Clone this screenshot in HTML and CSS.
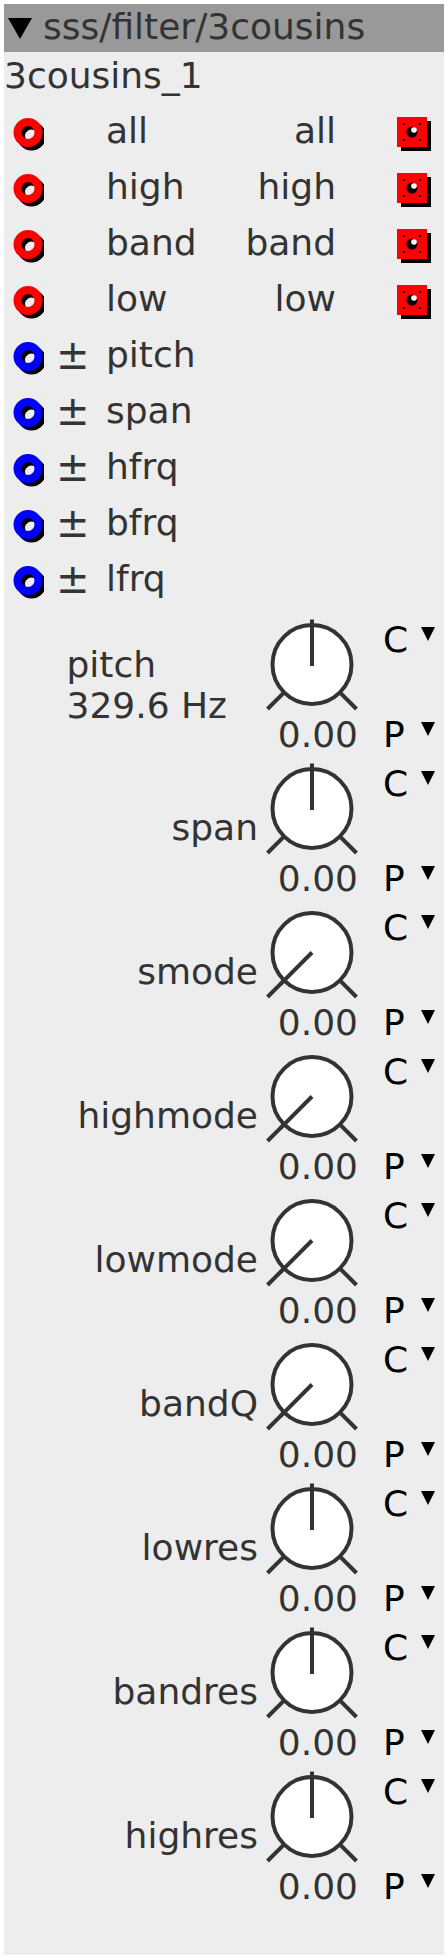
FILE: index.html
```html
<!DOCTYPE html>
<html>
<head>
<meta charset="utf-8">
<link rel="stylesheet" href="styles.css">
</head>
<body>
<div class="panel">
  <div class="header">
    <svg class="htri" width="24" height="21" viewBox="0 0 24 21"><polygon points="0,0 24,0 12,21" fill="#000"/></svg>
    <span class="title">sss/filter/3cousins</span>
  </div>
  <div class="name">3cousins_1</div>

  <div class="row">
    <svg class="inport" width="40" height="56" viewBox="0 0 40 56"><circle cx="27.5" cy="33" r="10.5" fill="none" stroke="#000" stroke-width="8"/><circle cx="24" cy="29.5" r="10.5" fill="none" stroke="#f00" stroke-width="8"/></svg>
    <span class="sign"></span>
    <span class="lab">all</span>
    <span class="rlab">all</span>
    <svg class="outport" width="48" height="56" viewBox="0 0 48 56"><rect x="5" y="18" width="30" height="30" fill="#000"/><rect x="1" y="14" width="30" height="30" fill="#f00"/><rect x="7" y="20" width="2" height="2" fill="#000"/><rect x="23" y="20" width="2" height="2" fill="#000"/><rect x="7" y="36" width="2" height="2" fill="#000"/><rect x="23" y="36" width="2" height="2" fill="#000"/><circle cx="16" cy="29" r="5.5" fill="#000"/><circle cx="18" cy="27" r="2.8" fill="#fff"/></svg>
  </div>
  <div class="row">
    <svg class="inport" width="40" height="56" viewBox="0 0 40 56"><circle cx="27.5" cy="33" r="10.5" fill="none" stroke="#000" stroke-width="8"/><circle cx="24" cy="29.5" r="10.5" fill="none" stroke="#f00" stroke-width="8"/></svg>
    <span class="sign"></span>
    <span class="lab">high</span>
    <span class="rlab">high</span>
    <svg class="outport" width="48" height="56" viewBox="0 0 48 56"><rect x="5" y="18" width="30" height="30" fill="#000"/><rect x="1" y="14" width="30" height="30" fill="#f00"/><rect x="7" y="20" width="2" height="2" fill="#000"/><rect x="23" y="20" width="2" height="2" fill="#000"/><rect x="7" y="36" width="2" height="2" fill="#000"/><rect x="23" y="36" width="2" height="2" fill="#000"/><circle cx="16" cy="29" r="5.5" fill="#000"/><circle cx="18" cy="27" r="2.8" fill="#fff"/></svg>
  </div>
  <div class="row">
    <svg class="inport" width="40" height="56" viewBox="0 0 40 56"><circle cx="27.5" cy="33" r="10.5" fill="none" stroke="#000" stroke-width="8"/><circle cx="24" cy="29.5" r="10.5" fill="none" stroke="#f00" stroke-width="8"/></svg>
    <span class="sign"></span>
    <span class="lab">band</span>
    <span class="rlab">band</span>
    <svg class="outport" width="48" height="56" viewBox="0 0 48 56"><rect x="5" y="18" width="30" height="30" fill="#000"/><rect x="1" y="14" width="30" height="30" fill="#f00"/><rect x="7" y="20" width="2" height="2" fill="#000"/><rect x="23" y="20" width="2" height="2" fill="#000"/><rect x="7" y="36" width="2" height="2" fill="#000"/><rect x="23" y="36" width="2" height="2" fill="#000"/><circle cx="16" cy="29" r="5.5" fill="#000"/><circle cx="18" cy="27" r="2.8" fill="#fff"/></svg>
  </div>
  <div class="row">
    <svg class="inport" width="40" height="56" viewBox="0 0 40 56"><circle cx="27.5" cy="33" r="10.5" fill="none" stroke="#000" stroke-width="8"/><circle cx="24" cy="29.5" r="10.5" fill="none" stroke="#f00" stroke-width="8"/></svg>
    <span class="sign"></span>
    <span class="lab">low</span>
    <span class="rlab">low</span>
    <svg class="outport" width="48" height="56" viewBox="0 0 48 56"><rect x="5" y="18" width="30" height="30" fill="#000"/><rect x="1" y="14" width="30" height="30" fill="#f00"/><rect x="7" y="20" width="2" height="2" fill="#000"/><rect x="23" y="20" width="2" height="2" fill="#000"/><rect x="7" y="36" width="2" height="2" fill="#000"/><rect x="23" y="36" width="2" height="2" fill="#000"/><circle cx="16" cy="29" r="5.5" fill="#000"/><circle cx="18" cy="27" r="2.8" fill="#fff"/></svg>
  </div>

  <div class="row">
    <svg class="inport" width="40" height="56" viewBox="0 0 40 56"><circle cx="27.5" cy="33" r="10.5" fill="none" stroke="#000" stroke-width="8"/><circle cx="24" cy="29.5" r="10.5" fill="none" stroke="#00f" stroke-width="8"/></svg>
    <span class="sign">±</span>
    <span class="lab">pitch</span>
  </div>
  <div class="row">
    <svg class="inport" width="40" height="56" viewBox="0 0 40 56"><circle cx="27.5" cy="33" r="10.5" fill="none" stroke="#000" stroke-width="8"/><circle cx="24" cy="29.5" r="10.5" fill="none" stroke="#00f" stroke-width="8"/></svg>
    <span class="sign">±</span>
    <span class="lab">span</span>
  </div>
  <div class="row">
    <svg class="inport" width="40" height="56" viewBox="0 0 40 56"><circle cx="27.5" cy="33" r="10.5" fill="none" stroke="#000" stroke-width="8"/><circle cx="24" cy="29.5" r="10.5" fill="none" stroke="#00f" stroke-width="8"/></svg>
    <span class="sign">±</span>
    <span class="lab">hfrq</span>
  </div>
  <div class="row">
    <svg class="inport" width="40" height="56" viewBox="0 0 40 56"><circle cx="27.5" cy="33" r="10.5" fill="none" stroke="#000" stroke-width="8"/><circle cx="24" cy="29.5" r="10.5" fill="none" stroke="#00f" stroke-width="8"/></svg>
    <span class="sign">±</span>
    <span class="lab">bfrq</span>
  </div>
  <div class="row">
    <svg class="inport" width="40" height="56" viewBox="0 0 40 56"><circle cx="27.5" cy="33" r="10.5" fill="none" stroke="#000" stroke-width="8"/><circle cx="24" cy="29.5" r="10.5" fill="none" stroke="#00f" stroke-width="8"/></svg>
    <span class="sign">±</span>
    <span class="lab">lfrq</span>
  </div>

  <div class="kblock">
    <div class="klabel"><div class="kl-two">pitch<br>329.6 Hz</div></div>
    <div class="kcol">
      <svg class="knob" width="96" height="98" viewBox="0 0 96 98"><circle cx="48" cy="49.5" r="39.5" fill="#fff" stroke="#333" stroke-width="4"/><line x1="19.7" y1="77.8" x2="3.5" y2="94" stroke="#333" stroke-width="4"/><line x1="76.3" y1="77.8" x2="92.5" y2="94" stroke="#333" stroke-width="4"/><line x1="48" y1="51" x2="48" y2="4.5" stroke="#333" stroke-width="4"/></svg>
      <div class="kval">0.00</div>
    </div>
    <div class="cp">
      <div class="cpl c"><span class="cpk">C</span><svg class="dd" width="14" height="14" viewBox="0 0 14 14"><polygon points="0,0 14,0 7,14" fill="#000"/></svg></div>
      <div class="cpl p"><span class="cpk">P</span><svg class="dd" width="14" height="14" viewBox="0 0 14 14"><polygon points="0,0 14,0 7,14" fill="#000"/></svg></div>
    </div>
  </div>

  <div class="kblock">
    <div class="klabel">span</div>
    <div class="kcol">
      <svg class="knob" width="96" height="98" viewBox="0 0 96 98"><circle cx="48" cy="49.5" r="39.5" fill="#fff" stroke="#333" stroke-width="4"/><line x1="19.7" y1="77.8" x2="3.5" y2="94" stroke="#333" stroke-width="4"/><line x1="76.3" y1="77.8" x2="92.5" y2="94" stroke="#333" stroke-width="4"/><line x1="48" y1="51" x2="48" y2="4.5" stroke="#333" stroke-width="4"/></svg>
      <div class="kval">0.00</div>
    </div>
    <div class="cp">
      <div class="cpl c"><span class="cpk">C</span><svg class="dd" width="14" height="14" viewBox="0 0 14 14"><polygon points="0,0 14,0 7,14" fill="#000"/></svg></div>
      <div class="cpl p"><span class="cpk">P</span><svg class="dd" width="14" height="14" viewBox="0 0 14 14"><polygon points="0,0 14,0 7,14" fill="#000"/></svg></div>
    </div>
  </div>

  <div class="kblock">
    <div class="klabel">smode</div>
    <div class="kcol">
      <svg class="knob" width="96" height="98" viewBox="0 0 96 98"><circle cx="48" cy="49.5" r="39.5" fill="#fff" stroke="#333" stroke-width="4"/><line x1="19.7" y1="77.8" x2="3.5" y2="94" stroke="#333" stroke-width="4"/><line x1="76.3" y1="77.8" x2="92.5" y2="94" stroke="#333" stroke-width="4"/><line x1="48" y1="49.5" x2="16.2" y2="81.3" stroke="#333" stroke-width="4"/></svg>
      <div class="kval">0.00</div>
    </div>
    <div class="cp">
      <div class="cpl c"><span class="cpk">C</span><svg class="dd" width="14" height="14" viewBox="0 0 14 14"><polygon points="0,0 14,0 7,14" fill="#000"/></svg></div>
      <div class="cpl p"><span class="cpk">P</span><svg class="dd" width="14" height="14" viewBox="0 0 14 14"><polygon points="0,0 14,0 7,14" fill="#000"/></svg></div>
    </div>
  </div>

  <div class="kblock">
    <div class="klabel">highmode</div>
    <div class="kcol">
      <svg class="knob" width="96" height="98" viewBox="0 0 96 98"><circle cx="48" cy="49.5" r="39.5" fill="#fff" stroke="#333" stroke-width="4"/><line x1="19.7" y1="77.8" x2="3.5" y2="94" stroke="#333" stroke-width="4"/><line x1="76.3" y1="77.8" x2="92.5" y2="94" stroke="#333" stroke-width="4"/><line x1="48" y1="49.5" x2="16.2" y2="81.3" stroke="#333" stroke-width="4"/></svg>
      <div class="kval">0.00</div>
    </div>
    <div class="cp">
      <div class="cpl c"><span class="cpk">C</span><svg class="dd" width="14" height="14" viewBox="0 0 14 14"><polygon points="0,0 14,0 7,14" fill="#000"/></svg></div>
      <div class="cpl p"><span class="cpk">P</span><svg class="dd" width="14" height="14" viewBox="0 0 14 14"><polygon points="0,0 14,0 7,14" fill="#000"/></svg></div>
    </div>
  </div>

  <div class="kblock">
    <div class="klabel">lowmode</div>
    <div class="kcol">
      <svg class="knob" width="96" height="98" viewBox="0 0 96 98"><circle cx="48" cy="49.5" r="39.5" fill="#fff" stroke="#333" stroke-width="4"/><line x1="19.7" y1="77.8" x2="3.5" y2="94" stroke="#333" stroke-width="4"/><line x1="76.3" y1="77.8" x2="92.5" y2="94" stroke="#333" stroke-width="4"/><line x1="48" y1="49.5" x2="16.2" y2="81.3" stroke="#333" stroke-width="4"/></svg>
      <div class="kval">0.00</div>
    </div>
    <div class="cp">
      <div class="cpl c"><span class="cpk">C</span><svg class="dd" width="14" height="14" viewBox="0 0 14 14"><polygon points="0,0 14,0 7,14" fill="#000"/></svg></div>
      <div class="cpl p"><span class="cpk">P</span><svg class="dd" width="14" height="14" viewBox="0 0 14 14"><polygon points="0,0 14,0 7,14" fill="#000"/></svg></div>
    </div>
  </div>

  <div class="kblock">
    <div class="klabel">bandQ</div>
    <div class="kcol">
      <svg class="knob" width="96" height="98" viewBox="0 0 96 98"><circle cx="48" cy="49.5" r="39.5" fill="#fff" stroke="#333" stroke-width="4"/><line x1="19.7" y1="77.8" x2="3.5" y2="94" stroke="#333" stroke-width="4"/><line x1="76.3" y1="77.8" x2="92.5" y2="94" stroke="#333" stroke-width="4"/><line x1="48" y1="49.5" x2="16.2" y2="81.3" stroke="#333" stroke-width="4"/></svg>
      <div class="kval">0.00</div>
    </div>
    <div class="cp">
      <div class="cpl c"><span class="cpk">C</span><svg class="dd" width="14" height="14" viewBox="0 0 14 14"><polygon points="0,0 14,0 7,14" fill="#000"/></svg></div>
      <div class="cpl p"><span class="cpk">P</span><svg class="dd" width="14" height="14" viewBox="0 0 14 14"><polygon points="0,0 14,0 7,14" fill="#000"/></svg></div>
    </div>
  </div>

  <div class="kblock">
    <div class="klabel">lowres</div>
    <div class="kcol">
      <svg class="knob" width="96" height="98" viewBox="0 0 96 98"><circle cx="48" cy="49.5" r="39.5" fill="#fff" stroke="#333" stroke-width="4"/><line x1="19.7" y1="77.8" x2="3.5" y2="94" stroke="#333" stroke-width="4"/><line x1="76.3" y1="77.8" x2="92.5" y2="94" stroke="#333" stroke-width="4"/><line x1="48" y1="51" x2="48" y2="4.5" stroke="#333" stroke-width="4"/></svg>
      <div class="kval">0.00</div>
    </div>
    <div class="cp">
      <div class="cpl c"><span class="cpk">C</span><svg class="dd" width="14" height="14" viewBox="0 0 14 14"><polygon points="0,0 14,0 7,14" fill="#000"/></svg></div>
      <div class="cpl p"><span class="cpk">P</span><svg class="dd" width="14" height="14" viewBox="0 0 14 14"><polygon points="0,0 14,0 7,14" fill="#000"/></svg></div>
    </div>
  </div>

  <div class="kblock">
    <div class="klabel">bandres</div>
    <div class="kcol">
      <svg class="knob" width="96" height="98" viewBox="0 0 96 98"><circle cx="48" cy="49.5" r="39.5" fill="#fff" stroke="#333" stroke-width="4"/><line x1="19.7" y1="77.8" x2="3.5" y2="94" stroke="#333" stroke-width="4"/><line x1="76.3" y1="77.8" x2="92.5" y2="94" stroke="#333" stroke-width="4"/><line x1="48" y1="51" x2="48" y2="4.5" stroke="#333" stroke-width="4"/></svg>
      <div class="kval">0.00</div>
    </div>
    <div class="cp">
      <div class="cpl c"><span class="cpk">C</span><svg class="dd" width="14" height="14" viewBox="0 0 14 14"><polygon points="0,0 14,0 7,14" fill="#000"/></svg></div>
      <div class="cpl p"><span class="cpk">P</span><svg class="dd" width="14" height="14" viewBox="0 0 14 14"><polygon points="0,0 14,0 7,14" fill="#000"/></svg></div>
    </div>
  </div>

  <div class="kblock">
    <div class="klabel">highres</div>
    <div class="kcol">
      <svg class="knob" width="96" height="98" viewBox="0 0 96 98"><circle cx="48" cy="49.5" r="39.5" fill="#fff" stroke="#333" stroke-width="4"/><line x1="19.7" y1="77.8" x2="3.5" y2="94" stroke="#333" stroke-width="4"/><line x1="76.3" y1="77.8" x2="92.5" y2="94" stroke="#333" stroke-width="4"/><line x1="48" y1="51" x2="48" y2="4.5" stroke="#333" stroke-width="4"/></svg>
      <div class="kval">0.00</div>
    </div>
    <div class="cp">
      <div class="cpl c"><span class="cpk">C</span><svg class="dd" width="14" height="14" viewBox="0 0 14 14"><polygon points="0,0 14,0 7,14" fill="#000"/></svg></div>
      <div class="cpl p"><span class="cpk">P</span><svg class="dd" width="14" height="14" viewBox="0 0 14 14"><polygon points="0,0 14,0 7,14" fill="#000"/></svg></div>
    </div>
  </div>
</div>
</body>
</html>
```

FILE: styles.css
```css
html, body {
  background: #fff;
}
body {
  margin: 4px 4px 0 4px;
  font-family: "DejaVu Sans", sans-serif;
  font-size: 36px;
  color: #333;
}
.panel {
  background: #ededed;
  padding-bottom: 52px;
}
.header {
  display: flex;
  align-items: flex-start;
  height: 48px;
  background: #999;
}
.htri {
  margin: 14px 11px 0 4px;
  flex: none;
}
.title {
  line-height: 46px;
  white-space: nowrap;
}
.name {
  line-height: 48px;
  padding-bottom: 3px;
}
.row {
  display: flex;
  align-items: center;
  height: 56px;
  line-height: 56px;
}
.inport, .outport {
  display: block;
  flex: none;
}
.sign {
  width: 50px;
  margin-left: 12px;
  flex: none;
  font-size: 40px;
}
.lab {
  flex: none;
}
.rlab {
  flex: 1;
  text-align: right;
  margin-right: 60px;
}
.kblock {
  display: flex;
  height: 144px;
}
.klabel {
  flex: 1;
  text-align: right;
  padding-right: 6px;
  align-self: center;
  margin-top: 8px;
  line-height: 41px;
}
.kl-two {
  display: inline-block;
  text-align: left;
  margin-right: 31px;
  margin-top: 4px;
}
.kcol {
  width: 96px;
  flex: none;
  display: flex;
  flex-direction: column;
}
.knob {
  display: block;
  margin-top: 8px;
}
.kval {
  line-height: 32px;
  padding-top: 6px;
  text-align: right;
  padding-right: 2px;
}
.cp {
  width: 84px;
  flex: none;
  padding-left: 23px;
  box-sizing: border-box;
  display: flex;
  flex-direction: column;
  color: #000;
}
.cpl {
  display: flex;
  align-items: flex-start;
  line-height: 40px;
}
.cpl.c {
  margin-top: 13px;
}
.cpl.p {
  margin-top: 55px;
}
.cpk {
  width: 38px;
  flex: none;
}
.dd {
  display: block;
  margin-top: 7px;
  flex: none;
}
```
